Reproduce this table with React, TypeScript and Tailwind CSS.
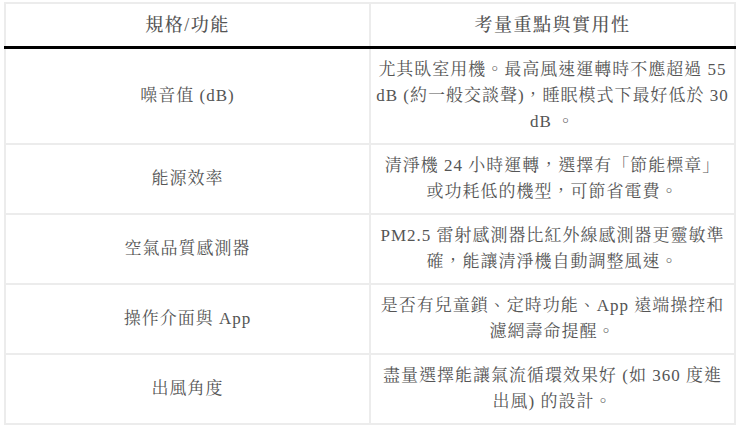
export default function App() {
  const rows: { spec: string; notes: string[] }[] = [
    {
      spec: '噪音值 (dB)',
      notes: ['尤其臥室用機。最高風速運轉時不應超過 55', 'dB (約一般交談聲)，睡眠模式下最好低於 30', 'dB 。'],
    },
    {
      spec: '能源效率',
      notes: ['清淨機 24 小時運轉，選擇有「節能標章」', '或功耗低的機型，可節省電費。'],
    },
    {
      spec: '空氣品質感測器',
      notes: ['PM2.5 雷射感測器比紅外線感測器更靈敏準', '確，能讓清淨機自動調整風速。'],
    },
    {
      spec: '操作介面與 App',
      notes: ['是否有兒童鎖、定時功能、App 遠端操控和', '濾網壽命提醒。'],
    },
    {
      spec: '出風角度',
      notes: ['盡量選擇能讓氣流循環效果好 (如 360 度進', '出風) 的設計。'],
    },
  ]

  return (
    <div
      className="w-[740px] h-[429px] bg-white px-[4px] pt-[2px] text-[#555555] overflow-hidden"
      style={{ fontFamily: '"Liberation Serif", "Noto Serif CJK TC", "Noto Sans CJK TC", serif' }}
    >
      <table className="w-[732px] table-fixed border-collapse border-2 border-[#ececec]">
        <thead>
          {/* header row with heavy rule below */}
          <tr>
            <th className="w-1/2 border-2 border-[#ececec] border-b-[3px] border-b-black py-[8px] text-center text-[18px] leading-[26px] tracking-[1.5px] font-medium">
              規格/功能
            </th>
            <th className="w-1/2 border-2 border-[#ececec] border-b-[3px] border-b-black py-[8px] text-center text-[18px] leading-[26px] tracking-[1.5px] font-medium">
              考量重點與實用性
            </th>
          </tr>
        </thead>
        <tbody>
          {rows.map((row) => (
            <tr key={row.spec}>
              <td className="border-2 border-[#ececec] py-[8px] px-[8px] text-center align-middle text-[17px] leading-[26px] tracking-[1px]">
                {row.spec}
              </td>
              <td className="border-2 border-[#ececec] py-[8px] px-[4px] text-center align-middle text-[17px] leading-[26px] tracking-[1px] whitespace-nowrap">
                {row.notes.map((line, i) => (
                  <span key={i} className="block">
                    {line}
                  </span>
                ))}
              </td>
            </tr>
          ))}
        </tbody>
      </table>
    </div>
  )
}
